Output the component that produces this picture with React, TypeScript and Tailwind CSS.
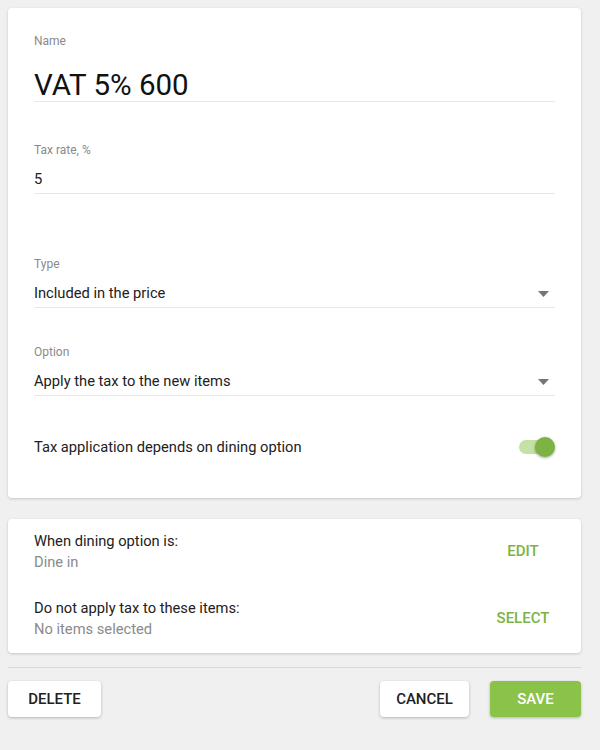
import React from 'react';

function Caret() {
  return (
    <svg width="11" height="6" viewBox="0 0 11 6" className="mr-[6px]">
      <path d="M0 0 L11 0 L5.5 6 Z" fill="#757575" />
    </svg>
  );
}

function Field({ label, value, select, labelTop }: { label: string; value: string; select?: boolean; labelTop: string }) {
  return (
    <div className={labelTop}>
      <div className="text-[12px] leading-4 text-[#8a8a8a]">{label}</div>
      <div className="mt-[9px] h-[27px] border-b border-[#e8e8e8] flex items-start justify-between">
        <span className="text-[14.7px] leading-6 text-[#212121]">{value}</span>
        {select && <div className="pt-[10px]"><Caret /></div>}
      </div>
    </div>
  );
}

function Toggle() {
  return (
    <div className="relative w-[36px] h-[20px] flex items-center">
      <div className="w-[34px] h-[14px] rounded-full bg-[#c5e1a5]" />
      <div className="absolute right-0 top-0 w-5 h-5 rounded-full bg-[#7cb342] shadow-[0_1px_3px_rgba(0,0,0,0.35)]" />
    </div>
  );
}

export default function App() {
  return (
    <div className="min-h-screen w-[600px] bg-[#f0f0f0] pt-2 pl-2" style={{ fontFamily: 'Roboto, "Liberation Sans", sans-serif' }}>
      <div className="w-[573px]">
        {/* Main form */}
        <div className="bg-white rounded-sm shadow-[0_1px_3px_rgba(0,0,0,0.18)] pl-[26px] pr-[26px] pt-[25px] pb-[39px]">
          <div className="text-[12px] leading-4 text-[#8a8a8a]">Name</div>
          <div className="mt-[20px] h-[33px] border-b border-[#e8e8e8] text-[29.5px] leading-8 text-[#111]">VAT 5% 600</div>

          <Field labelTop="mt-[40px]" label="Tax rate, %" value="5" />
          <Field labelTop="mt-[62px]" label="Type" value="Included in the price" select />
          <Field labelTop="mt-[36px]" label="Option" value="Apply the tax to the new items" select />

          <div className="mt-[39px] flex items-center justify-between h-6">
            <span className="text-[14.7px] text-[#212121]">Tax application depends on dining option</span>
            <Toggle />
          </div>
        </div>

        {/* Dining option */}
        <div className="mt-[21px] bg-white rounded-sm shadow-[0_1px_3px_rgba(0,0,0,0.18)] pl-[26px] pr-[14px] pt-[12px] pb-[14px]">
          <div className="flex items-center justify-between">
            <div>
              <div className="text-[14.7px] leading-5 text-[#212121]">When dining option is:</div>
              <div className="text-[14.7px] leading-5 text-[#8a8a8a] mt-[1px]">Dine in</div>
            </div>
            <button className="w-[88px] text-center text-[15px] font-medium text-[#7cb342]">EDIT</button>
          </div>
          <div className="mt-[26px] flex items-center justify-between">
            <div>
              <div className="text-[14.7px] leading-5 text-[#212121]">Do not apply tax to these items:</div>
              <div className="text-[14.7px] leading-5 text-[#8a8a8a] mt-[1px]">No items selected</div>
            </div>
            <button className="w-[88px] text-center text-[15px] font-medium text-[#7cb342]">SELECT</button>
          </div>
        </div>

        <div className="mt-[14px] h-px bg-[#d9d9d9]" />

        {/* Actions */}
        <div className="mt-[13px] flex items-center">
          <button className="w-[93px] h-9 bg-white rounded-sm shadow-[0_1px_3px_rgba(0,0,0,0.25)] text-[15px] font-medium text-[#212121]">DELETE</button>
          <div className="flex-1" />
          <button className="w-[89px] h-9 bg-white rounded-sm shadow-[0_1px_3px_rgba(0,0,0,0.25)] text-[15px] font-medium text-[#212121]">CANCEL</button>
          <button className="ml-[21px] w-[91px] h-9 bg-[#8bc34a] rounded-sm shadow-[0_1px_3px_rgba(0,0,0,0.25)] text-[15px] font-medium text-white">SAVE</button>
        </div>
      </div>
    </div>
  );
}
